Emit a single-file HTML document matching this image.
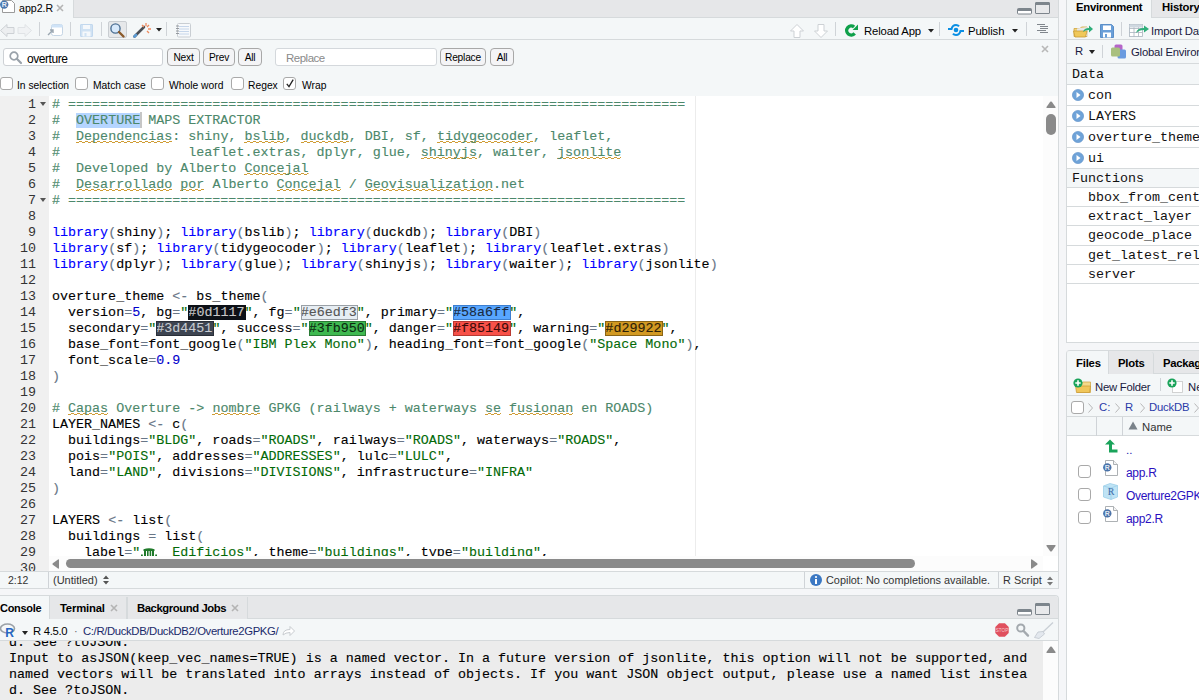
<!DOCTYPE html><html><head><meta charset="utf-8"><style>
*{box-sizing:border-box;margin:0;padding:0}
html,body{width:1199px;height:700px;overflow:hidden;background:#f5f6f8;font-family:"Liberation Sans",sans-serif;font-size:11px;color:#000;position:relative}
.a{position:absolute}
.t{position:absolute;white-space:pre;line-height:1}
.m{font-family:"Liberation Mono",monospace}
.b{font-weight:bold}
.code{position:absolute;left:52px;-webkit-text-stroke:0.12px currentColor;white-space:pre;font-family:"Liberation Mono",monospace;font-size:13.37px;line-height:16px;height:16px;color:#000}
.ln{position:absolute;left:0;width:36px;text-align:right;font-family:"Liberation Mono",monospace;font-size:13.33px;line-height:16px;color:#333}
.c{color:#4c886b}
.k{color:#0000ff}
.s{color:#036a07}
.n{color:#0000cd}
.o{color:#687687}
.sp{display:inline-block;height:16px;vertical-align:top;background-image:linear-gradient(90deg,#cf9c34 3px,transparent 3px),linear-gradient(90deg,transparent 3px,#cf9c34 3px);background-size:6px 1px,6px 1px;background-repeat:repeat-x;background-position:0 13px,0 12px}
.sep{position:absolute;width:1px;background:#cfd3d7}
.cb{position:absolute;width:12px;height:12px;border:1px solid #a9a9a9;border-radius:3px;background:#fff}
.btn{position:absolute;border:1px solid #a8a8a8;border-radius:4px;background:#f4f4f6;height:18px;text-align:center;line-height:15px}
svg{position:absolute;overflow:visible}
</style></head><body><div class="a" style="left:0px;top:0px;width:1059px;height:589px;background:#f4f7f8;border-right:1px solid #d6dadc;border-bottom:1px solid #d6dadc"></div><div class="a" style="left:0px;top:0px;width:1058px;height:18px;background:#e6e7e9;border-bottom:1px solid #d6dadc"></div><div class="a" style="left:0px;top:0px;width:74px;height:18px;background:#f4f7f8;border-right:1px solid #d6dadc"></div><svg style="left:0px;top:0px;" width="16" height="14" viewBox="0 0 16 14"><path d="M2.5 0.5h9l3 3v9h-12z" fill="#fff" stroke="#9a9a9a"/><circle cx="4.2" cy="4.6" r="4.2" fill="#4a78b0"/><text x="4.2" y="7.3" font-size="7" font-weight="bold" fill="#e8eef6" text-anchor="middle" font-family="Liberation Sans">R</text></svg><div class="t " style="left:19px;top:3px;font-size:10.6px;color:#000">app2.R</div><svg style="left:56px;top:4px;" width="8" height="8" viewBox="0 0 8 8"><path d="M1 1L7 7M7 1L1 7" stroke="#b4b4b4" stroke-width="1.6"/></svg><svg style="left:1017px;top:8px;" width="15" height="8" viewBox="0 0 15 8"><rect x="0.5" y="0.5" width="14" height="5.5" rx="1" fill="#fff" stroke="#7d858c" stroke-width="1"/><rect x="0.5" y="0.5" width="14" height="2.5" rx="1" fill="#7d858c"/></svg><svg style="left:1035px;top:2px;" width="15" height="13" viewBox="0 0 15 13"><rect x="0.5" y="0.5" width="14" height="11" rx="0.5" fill="#e8e9eb" stroke="#7d858c" stroke-width="1"/><rect x="0.5" y="0.5" width="14" height="2.5" rx="0.5" fill="#7d858c"/></svg><div class="a" style="left:0px;top:39px;width:1058px;height:1px;background:#d6dadc"></div><svg style="left:0px;top:24px;" width="32" height="13" viewBox="0 0 32 13"><path d="M0.5 6.5L7 0.5V3.5H14V9.5H7V12.5Z" fill="#eceef0" stroke="#cdd1d5"/><path d="M31.5 6.5L25 0.5V3.5H18V9.5H25V12.5Z" fill="#f0f2f4" stroke="#e0e3e6"/></svg><div class="a" style="left:39px;top:22px;width:1px;height:14px;background:#cfd3d7"></div><svg style="left:47px;top:24px;" width="16" height="13" viewBox="0 0 16 13"><rect x="4.5" y="0.5" width="11" height="11" rx="2" fill="#fff" stroke="#c5d5e5"/><rect x="4.5" y="0.5" width="11" height="3" rx="1" fill="#cfe3f7"/><path d="M1 11L6 6M3 6H6V9" stroke="#9aa6b0" stroke-width="1.4" fill="none"/></svg><div class="a" style="left:70px;top:22px;width:1px;height:14px;background:#cfd3d7"></div><svg style="left:80px;top:24px;" width="13" height="13" viewBox="0 0 13 13"><rect x="0.5" y="0.5" width="12" height="12" rx="0.5" fill="#d0e2f3" stroke="#c2d8ee"/><rect x="3" y="1" width="7" height="4" fill="#f5f8fb"/><rect x="2.5" y="7.5" width="8" height="5" fill="#f5f8fb"/><rect x="4.5" y="9" width="2" height="3.5" fill="#d0e2f3"/></svg><div class="a" style="left:101px;top:22px;width:1px;height:14px;background:#cfd3d7"></div><div class="a" style="left:108px;top:21px;width:19px;height:17px;background:#e6e8ea;border:1px solid #c9cdd1;border-radius:2px"></div><svg style="left:110px;top:23px;" width="15" height="14" viewBox="0 0 15 14"><circle cx="5.5" cy="5.5" r="4.6" fill="#d7e9fb" stroke="#4b6f93" stroke-width="1.4"/><path d="M9 9L13.5 13.5" stroke="#8a5a2b" stroke-width="2.4" stroke-linecap="round"/></svg><svg style="left:133px;top:22px;" width="20" height="16" viewBox="0 0 20 16"><path d="M1.5 14.5L11 5" stroke="#4c4f55" stroke-width="2.6" stroke-linecap="round"/><path d="M1.5 14.5L3 13" stroke="#5b9bd5" stroke-width="2.6" stroke-linecap="round"/><path d="M13 1v3M16 3l-2 2M18 7h-3M16 11l-2-2M9 3l2 2" stroke="#f08a5d" stroke-width="1.3"/></svg><svg style="left:156px;top:28px;" width="6" height="4" viewBox="0 0 6 4"><path d="M0 0H6L3 3.5Z" fill="#222"/></svg><div class="a" style="left:166px;top:22px;width:1px;height:14px;background:#cfd3d7"></div><svg style="left:176px;top:23px;" width="15" height="15" viewBox="0 0 15 15"><rect x="1.5" y="0.5" width="13" height="13.5" rx="1" fill="#f7f9fb" stroke="#c9ced3"/><path d="M3 3.5H13M3 6H13M3 8.5H13M3 11H13" stroke="#c6d6ea" stroke-width="1"/><path d="M0 3h3M0 5.5h3M0 8h3M0 10.5h3" stroke="#8c9196" stroke-width="0.9"/></svg><svg style="left:790px;top:24px;" width="14" height="14" viewBox="0 0 14 14"><path d="M7 0.5L13.5 7H10V13.5H4V7H0.5Z" fill="#fff" stroke="#cdd1d5"/></svg><svg style="left:814px;top:24px;" width="14" height="14" viewBox="0 0 14 14"><path d="M7 13.5L13.5 7H10V0.5H4V7H0.5Z" fill="#fff" stroke="#cdd1d5"/></svg><div class="a" style="left:835px;top:22px;width:1px;height:14px;background:#cfd3d7"></div><svg style="left:844px;top:23px;" width="15" height="15" viewBox="0 0 15 15"><path d="M10.65 10.39A4.5 4.5 0 1 1 10.09 4.05" stroke="#0fa04a" stroke-width="3.4" fill="none"/><path d="M14 1.6V7H8.6Z" fill="#0fa04a"/></svg><div class="t " style="left:864px;top:26px;font-size:11.3px;letter-spacing:-0.15px">Reload App</div><svg style="left:928px;top:29px;" width="6" height="4" viewBox="0 0 6 4"><path d="M0 0H6L3 3.5Z" fill="#222"/></svg><div class="a" style="left:939px;top:22px;width:1px;height:14px;background:#cfd3d7"></div><svg style="left:947px;top:23px;" width="18" height="14" viewBox="0 0 18 14"><path d="M1 6H4.5Q5.5 2 9 2Q11 2 12 3.3" stroke="#0b8fe3" stroke-width="2.1" fill="none"/><path d="M17 8H13.5Q12.5 12 9 12Q7 12 6 10.7" stroke="#0b8fe3" stroke-width="2.1" fill="none"/><circle cx="9" cy="7" r="2.3" fill="#0b8fe3"/></svg><div class="t " style="left:968px;top:26px;font-size:11.3px;letter-spacing:-0.1px">Publish</div><svg style="left:1012px;top:29px;" width="6" height="4" viewBox="0 0 6 4"><path d="M0 0H6L3 3.5Z" fill="#222"/></svg><div class="a" style="left:1026px;top:22px;width:1px;height:14px;background:#cfd3d7"></div><svg style="left:1037px;top:23px;" width="12" height="11" viewBox="0 0 12 11"><path d="M0 1.5H8M3 3.5H11M3 5.5H11M0 7.5H9M3 9.5H11" stroke="#80868c" stroke-width="1"/></svg><div class="a" style="left:3px;top:48px;width:160px;height:18px;background:#fff;border:1px solid #cdd1d5;border-radius:3px"></div><svg style="left:9px;top:51px;" width="14" height="13" viewBox="0 0 14 13"><circle cx="5" cy="5" r="3.8" fill="none" stroke="#9aa2aa" stroke-width="1.7"/><path d="M7.8 7.8L12 12" stroke="#9aa2aa" stroke-width="2.2" stroke-linecap="round"/></svg><div class="t " style="left:27px;top:53px;font-size:12px;letter-spacing:-0.45px">overture</div><div class="btn" style="left:167px;top:48px;width:33px"><span class="t" style="position:static;font-size:10.2px;line-height:17px;letter-spacing:-0.2px">Next</span></div><div class="btn" style="left:203px;top:48px;width:32px"><span class="t" style="position:static;font-size:10.2px;line-height:17px;letter-spacing:-0.2px">Prev</span></div><div class="btn" style="left:238px;top:48px;width:24px"><span class="t" style="position:static;font-size:10.2px;line-height:17px;letter-spacing:-0.2px">All</span></div><div class="btn" style="left:440px;top:48px;width:46px"><span class="t" style="position:static;font-size:10.2px;line-height:17px;letter-spacing:-0.2px">Replace</span></div><div class="btn" style="left:490px;top:48px;width:24px"><span class="t" style="position:static;font-size:10.2px;line-height:17px;letter-spacing:-0.2px">All</span></div><div class="a" style="left:275px;top:48px;width:162px;height:18px;background:#fff;border:1px solid #d4d8dc;border-radius:3px"></div><div class="t " style="left:286px;top:53px;font-size:11.5px;letter-spacing:-0.5px;color:#8a8a8a">Replace</div><svg style="left:1041px;top:45px;" width="8" height="8" viewBox="0 0 8 8"><path d="M1 1L7 7M7 1L1 7" stroke="#b8b8b8" stroke-width="1.6"/></svg><div class="a" style="left:0px;top:77px;width:13px;height:13px;background:#fff;border:1px solid #a9a9a9;border-radius:3px"></div><div class="t " style="left:17px;top:81px;font-size:10.3px">In selection</div><div class="a" style="left:75px;top:77px;width:13px;height:13px;background:#fff;border:1px solid #a9a9a9;border-radius:3px"></div><div class="t " style="left:93px;top:81px;font-size:10.3px">Match case</div><div class="a" style="left:151px;top:77px;width:13px;height:13px;background:#fff;border:1px solid #a9a9a9;border-radius:3px"></div><div class="t " style="left:169px;top:81px;font-size:10.3px">Whole word</div><div class="a" style="left:231px;top:77px;width:13px;height:13px;background:#fff;border:1px solid #a9a9a9;border-radius:3px"></div><div class="t " style="left:248px;top:81px;font-size:10.3px">Regex</div><div class="a" style="left:283px;top:77px;width:13px;height:13px;background:#fff;border:1px solid #a9a9a9;border-radius:3px"></div><div class="t " style="left:302px;top:81px;font-size:10.3px">Wrap</div><svg style="left:286px;top:79px;" width="8" height="9" viewBox="0 0 8 9"><path d="M0.8 4.8L3 7.6L7.2 0.6" stroke="#222" stroke-width="1.3" fill="none"/></svg><div class="a" style="left:0px;top:96px;width:49px;height:475px;background:#f0f0f0"></div><div class="a" style="left:49px;top:96px;width:994px;height:460px;background:#fff"></div><div class="a" style="left:695px;top:96px;width:1px;height:460px;background:#ececec"></div><div class="a" style="left:1043px;top:96px;width:15px;height:460px;background:#fcfcfc"></div><svg style="left:1046px;top:101px;" width="10" height="8" viewBox="0 0 10 8"><path d="M4.2 0.8Q5 0 5.8 0.8L9.5 6Q10 7 9 7H1Q0 7 0.5 6Z" fill="#8a8a8a"/></svg><div class="a" style="left:1046px;top:114px;width:10px;height:21px;background:#8a8a8a;border-radius:5px"></div><svg style="left:1046px;top:545px;" width="10" height="8" viewBox="0 0 10 8"><path d="M4.2 6.2Q5 7 5.8 6.2L9.5 1Q10 0 9 0H1Q0 0 0.5 1Z" fill="#8a8a8a"/></svg><div class="a" style="left:0;top:96px;width:1043px;height:475px;overflow:hidden"><div class="ln" style="top:1px">1</div><div class="code" style="top:1px;clip-path:inset(0 0 0px 0)"><span class="c"># =============================================================================</span></div><div class="ln" style="top:17px">2</div><div class="code" style="top:17px;clip-path:inset(0 0 0px 0)"><span class="c">#  <span style="background:#b5d5ff;box-shadow:1px 0 0 #b5d5ff">OVERTURE</span> MAPS EXTRACTOR</span></div><div class="ln" style="top:33px">3</div><div class="code" style="top:33px;clip-path:inset(0 0 0px 0)"><span class="c">#  <span class="sp">Dependencias</span>: shiny, <span class="sp">bslib</span>, <span class="sp">duckdb</span>, DBI, sf, <span class="sp">tidygeocoder</span>, leaflet,</span></div><div class="ln" style="top:49px">4</div><div class="code" style="top:49px;clip-path:inset(0 0 0px 0)"><span class="c">#                leaflet.extras, dplyr, glue, <span class="sp">shinyjs</span>, waiter, <span class="sp">jsonlite</span></span></div><div class="ln" style="top:65px">5</div><div class="code" style="top:65px;clip-path:inset(0 0 0px 0)"><span class="c">#  Developed by Alberto <span class="sp">Concejal</span></span></div><div class="ln" style="top:81px">6</div><div class="code" style="top:81px;clip-path:inset(0 0 0px 0)"><span class="c">#  <span class="sp">Desarrollado</span> <span class="sp">por</span> Alberto <span class="sp">Concejal</span> / <span class="sp">Geovisualization</span>.net</span></div><div class="ln" style="top:97px">7</div><div class="code" style="top:97px;clip-path:inset(0 0 0px 0)"><span class="c"># =============================================================================</span></div><div class="ln" style="top:113px">8</div><div class="code" style="top:113px;clip-path:inset(0 0 0px 0)"></div><div class="ln" style="top:129px">9</div><div class="code" style="top:129px;clip-path:inset(0 0 0px 0)"><span class="k">library</span><span class="o">(</span>shiny<span class="o">)</span>; <span class="k">library</span><span class="o">(</span>bslib<span class="o">)</span>; <span class="k">library</span><span class="o">(</span>duckdb<span class="o">)</span>; <span class="k">library</span><span class="o">(</span>DBI<span class="o">)</span></div><div class="ln" style="top:145px">10</div><div class="code" style="top:145px;clip-path:inset(0 0 0px 0)"><span class="k">library</span><span class="o">(</span>sf<span class="o">)</span>; <span class="k">library</span><span class="o">(</span>tidygeocoder<span class="o">)</span>; <span class="k">library</span><span class="o">(</span>leaflet<span class="o">)</span>; <span class="k">library</span><span class="o">(</span>leaflet.extras<span class="o">)</span></div><div class="ln" style="top:161px">11</div><div class="code" style="top:161px;clip-path:inset(0 0 0px 0)"><span class="k">library</span><span class="o">(</span>dplyr<span class="o">)</span>; <span class="k">library</span><span class="o">(</span>glue<span class="o">)</span>; <span class="k">library</span><span class="o">(</span>shinyjs<span class="o">)</span>; <span class="k">library</span><span class="o">(</span>waiter<span class="o">)</span>; <span class="k">library</span><span class="o">(</span>jsonlite<span class="o">)</span></div><div class="ln" style="top:177px">12</div><div class="code" style="top:177px;clip-path:inset(0 0 0px 0)"></div><div class="ln" style="top:193px">13</div><div class="code" style="top:193px;clip-path:inset(0 0 0px 0)">overture_theme <span class="o">&lt;-</span> bs_theme<span class="o">(</span></div><div class="ln" style="top:209px">14</div><div class="code" style="top:209px;clip-path:inset(0 0 0px 0)">  version<span class="o">=</span><span class="n">5</span>, bg<span class="o">=</span><span class="s">"</span><span style="background:#0d1117;color:#c8c8c8;outline:1px solid #0d1117;outline-offset:-1px;padding-right:1.5px;margin-right:-1.5px">#0d1117</span><span class="s">"</span>, fg<span class="o">=</span><span class="s">"</span><span style="background:#e6edf3;color:#555;outline:1px solid #9aa0a6;outline-offset:-1px;padding-right:1.5px;margin-right:-1.5px">#e6edf3</span><span class="s">"</span>, primary<span class="o">=</span><span class="s">"</span><span style="background:#58a6ff;color:#1a2a40;outline:1px solid #3d7fd0;outline-offset:-1px;padding-right:1.5px;margin-right:-1.5px">#58a6ff</span><span class="s">"</span>,</div><div class="ln" style="top:225px">15</div><div class="code" style="top:225px;clip-path:inset(0 0 0px 0)">  secondary<span class="o">=</span><span class="s">"</span><span style="background:#3d4451;color:#c8ccd2;outline:1px solid #2a2f38;outline-offset:-1px;padding-right:1.5px;margin-right:-1.5px">#3d4451</span><span class="s">"</span>, success<span class="o">=</span><span class="s">"</span><span style="background:#3fb950;color:#0c2a10;outline:1px solid #2a7a35;outline-offset:-1px;padding-right:1.5px;margin-right:-1.5px">#3fb950</span><span class="s">"</span>, danger<span class="o">=</span><span class="s">"</span><span style="background:#f85149;color:#3a0b08;outline:1px solid #b83a33;outline-offset:-1px;padding-right:1.5px;margin-right:-1.5px">#f85149</span><span class="s">"</span>, warning<span class="o">=</span><span class="s">"</span><span style="background:#d29922;color:#2d2008;outline:1px solid #8a6416;outline-offset:-1px;padding-right:1.5px;margin-right:-1.5px">#d29922</span><span class="s">"</span>,</div><div class="ln" style="top:241px">16</div><div class="code" style="top:241px;clip-path:inset(0 0 0px 0)">  base_font<span class="o">=</span>font_google<span class="o">(</span><span class="s">"IBM Plex Mono"</span><span class="o">)</span>, heading_font<span class="o">=</span>font_google<span class="o">(</span><span class="s">"Space Mono"</span><span class="o">)</span>,</div><div class="ln" style="top:257px">17</div><div class="code" style="top:257px;clip-path:inset(0 0 0px 0)">  font_scale<span class="o">=</span><span class="n">0.9</span></div><div class="ln" style="top:273px">18</div><div class="code" style="top:273px;clip-path:inset(0 0 0px 0)"><span class="o">)</span></div><div class="ln" style="top:289px">19</div><div class="code" style="top:289px;clip-path:inset(0 0 0px 0)"></div><div class="ln" style="top:305px">20</div><div class="code" style="top:305px;clip-path:inset(0 0 0px 0)"><span class="c"># <span class="sp">Capas</span> Overture -&gt; <span class="sp">nombre</span> GPKG (railways + waterways <span class="sp">se</span> <span class="sp">fusionan</span> en ROADS)</span></div><div class="ln" style="top:321px">21</div><div class="code" style="top:321px;clip-path:inset(0 0 0px 0)">LAYER_NAMES <span class="o">&lt;-</span> c<span class="o">(</span></div><div class="ln" style="top:337px">22</div><div class="code" style="top:337px;clip-path:inset(0 0 0px 0)">  buildings<span class="o">=</span><span class="s">"BLDG"</span>, roads<span class="o">=</span><span class="s">"ROADS"</span>, railways<span class="o">=</span><span class="s">"ROADS"</span>, waterways<span class="o">=</span><span class="s">"ROADS"</span>,</div><div class="ln" style="top:353px">23</div><div class="code" style="top:353px;clip-path:inset(0 0 0px 0)">  pois<span class="o">=</span><span class="s">"POIS"</span>, addresses<span class="o">=</span><span class="s">"ADDRESSES"</span>, lulc<span class="o">=</span><span class="s">"LULC"</span>,</div><div class="ln" style="top:369px">24</div><div class="code" style="top:369px;clip-path:inset(0 0 0px 0)">  land<span class="o">=</span><span class="s">"LAND"</span>, divisions<span class="o">=</span><span class="s">"DIVISIONS"</span>, infrastructure<span class="o">=</span><span class="s">"INFRA"</span></div><div class="ln" style="top:385px">25</div><div class="code" style="top:385px;clip-path:inset(0 0 0px 0)"><span class="o">)</span></div><div class="ln" style="top:401px">26</div><div class="code" style="top:401px;clip-path:inset(0 0 0px 0)"></div><div class="ln" style="top:417px">27</div><div class="code" style="top:417px;clip-path:inset(0 0 0px 0)">LAYERS <span class="o">&lt;-</span> list<span class="o">(</span></div><div class="ln" style="top:433px">28</div><div class="code" style="top:433px;clip-path:inset(0 0 0px 0)">  buildings <span class="o">=</span> list<span class="o">(</span></div><div class="ln" style="top:449px">29</div><div class="code" style="top:449px;clip-path:inset(0 0 4px 0)">    label<span class="o">=</span><span class="s">"<span style="display:inline-block;width:24px;height:12px;position:relative;vertical-align:-1px"><svg width="16" height="10" style="position:absolute;left:1px;top:3px" viewBox="0 0 16 10"><path d="M2.5 1.2Q8 -0.5 13.5 1.2V3H2.5Z" fill="#1f7a2a"/><path d="M3 3h2v5H3zM6 3h1.6v5H6zM8.6 3h1.6v5H8.6zM11 3h2v5h-2z" fill="#1f7a2a"/><path d="M1.5 8h13v1.5h-13z" fill="#1f7a2a"/><path d="M0 6.5h1.8v3H0zM14.2 6.5H16v3h-1.8z" fill="#1f7a2a"/></svg></span> Edificios"</span>, theme<span class="o">=</span><span class="s">"buildings"</span>, type<span class="o">=</span><span class="s">"building"</span>,</div><div class="ln" style="top:465px">30</div><svg style="left:40px;top:6px" width="6" height="4" viewBox="0 0 6 4"><path d="M0 0H6L3 4Z" fill="#555"/></svg><svg style="left:40px;top:102px" width="6" height="4" viewBox="0 0 6 4"><path d="M0 0H6L3 4Z" fill="#555"/></svg></div><div class="a" style="left:140px;top:112px;width:2px;height:16px;background:#c6c6c6"></div><div class="a" style="left:49px;top:556px;width:994px;height:15px;background:#fcfcfc"></div><svg style="left:52px;top:559px;" width="8" height="10" viewBox="0 0 8 10"><path d="M0.8 4.2Q0 5 0.8 5.8L6 9.5Q7 10 7 9V1Q7 0 6 0.5Z" fill="#8a8a8a"/></svg><div class="a" style="left:66px;top:559px;width:849px;height:9px;background:#8a8a8a;border-radius:5px"></div><svg style="left:1031px;top:559px;" width="8" height="10" viewBox="0 0 8 10"><path d="M6.2 4.2Q7 5 6.2 5.8L1 9.5Q0 10 0 9V1Q0 0 1 0.5Z" fill="#8a8a8a"/></svg><div class="a" style="left:1043px;top:556px;width:15px;height:15px;background:#fff"></div><div class="a" style="left:0px;top:571px;width:1058px;height:1px;background:#d6dadc"></div><div class="t " style="left:8px;top:575px;font-size:10.5px;color:#333">2:12</div><div class="a" style="left:48px;top:572px;width:1px;height:16px;background:#cfd3d7"></div><div class="t " style="left:53px;top:575px;font-size:11px;color:#333">(Untitled)</div><svg style="left:103px;top:575px;" width="6" height="10" viewBox="0 0 6 10"><path d="M0 4L3 0.5L6 4ZM0 6L3 9.5L6 6Z" fill="#555"/></svg><div class="a" style="left:804px;top:572px;width:1px;height:16px;background:#cfd3d7"></div><svg style="left:810px;top:574px;" width="12" height="12" viewBox="0 0 12 12"><circle cx="6" cy="6" r="6" fill="#3b78c3"/><rect x="5" y="5" width="2" height="5" fill="#fff"/><circle cx="6" cy="3" r="1.1" fill="#fff"/></svg><div class="t " style="left:826px;top:575px;font-size:10.9px;color:#333">Copilot: No completions available.</div><div class="a" style="left:998px;top:572px;width:1px;height:16px;background:#cfd3d7"></div><div class="t " style="left:1003px;top:575px;font-size:10.9px;color:#333">R Script</div><svg style="left:1047px;top:576px;" width="6" height="10" viewBox="0 0 6 10"><path d="M0 4L3 0.5L6 4ZM0 6L3 9.5L6 6Z" fill="#777"/></svg><div class="a" style="left:0px;top:595px;width:1059px;height:105px;background:#f4f7f8;border-top:1px solid #d6dadc;border-right:1px solid #d6dadc;border-top-right-radius:4px"></div><div class="a" style="left:0px;top:596px;width:1058px;height:23px;background:#e6e7e9;border-bottom:1px solid #d6dadc;border-top-right-radius:3px"></div><div class="a" style="left:0px;top:596px;width:50px;height:23px;background:#f4f7f8;border-right:1px solid #d6dadc"></div><div class="t " style="left:0px;top:603px;font-size:11px;font-weight:bold;letter-spacing:-0.3px">Console</div><div class="a" style="left:50px;top:597px;width:77px;height:22px;background:#e6e7e9;border-right:1px solid #d6dadc"></div><div class="t " style="left:60px;top:603px;font-size:11.3px;font-weight:bold;letter-spacing:-0.2px">Terminal</div><svg style="left:110px;top:604px;" width="8" height="8" viewBox="0 0 8 8"><path d="M1 1L7 7M7 1L1 7" stroke="#b4b4b4" stroke-width="1.6"/></svg><div class="a" style="left:127px;top:597px;width:121px;height:22px;background:#e6e7e9;border-right:1px solid #d6dadc;border-left:1px solid #d6dadc"></div><div class="t " style="left:137px;top:603px;font-size:11.3px;font-weight:bold;letter-spacing:-0.42px">Background Jobs</div><svg style="left:231px;top:604px;" width="8" height="8" viewBox="0 0 8 8"><path d="M1 1L7 7M7 1L1 7" stroke="#b4b4b4" stroke-width="1.6"/></svg><svg style="left:1017px;top:609px;" width="15" height="8" viewBox="0 0 15 8"><rect x="0.5" y="0.5" width="14" height="5.5" rx="1" fill="#fff" stroke="#7d858c" stroke-width="1"/><rect x="0.5" y="0.5" width="14" height="2.5" rx="1" fill="#7d858c"/></svg><svg style="left:1035px;top:603px;" width="15" height="13" viewBox="0 0 15 13"><rect x="0.5" y="0.5" width="14" height="11" rx="0.5" fill="#e8e9eb" stroke="#7d858c" stroke-width="1"/><rect x="0.5" y="0.5" width="14" height="2.5" rx="0.5" fill="#7d858c"/></svg><div class="a" style="left:0px;top:640px;width:1058px;height:1px;background:#d6dadc"></div><svg style="left:0px;top:623px;" width="17" height="14" viewBox="0 0 17 14"><ellipse cx="7.5" cy="5.5" rx="7" ry="4.5" fill="none" stroke="#9aa0a6" stroke-width="1.6"/><text x="9.5" y="13.5" font-size="12" font-weight="bold" fill="#2566c4" text-anchor="middle" font-family="Liberation Sans">R</text></svg><svg style="left:22px;top:631px;" width="6" height="4" viewBox="0 0 6 4"><path d="M0 0H6L3 4Z" fill="#222"/></svg><div class="t " style="left:33px;top:626px;font-size:11.3px;letter-spacing:-0.3px">R 4.5.0</div><div class="t " style="left:74px;top:626px;font-size:11px;color:#666">·</div><div class="t " style="left:83px;top:626px;font-size:11.3px;letter-spacing:-0.35px;color:#1a2a6a">C:/R/DuckDB/DuckDB2/Overture2GPKG/</div><svg style="left:282px;top:626px;" width="13" height="10" viewBox="0 0 13 10"><path d="M1 9Q1 3.5 8 3.5V0.5L12.5 5L8 9.5V6.5Q3.5 6.5 1 9Z" fill="#fff" stroke="#c8ccd0"/></svg><svg style="left:995px;top:623px;" width="14" height="14" viewBox="0 0 14 14"><path d="M4.1 0.3H9.9L13.7 4.1V9.9L9.9 13.7H4.1L0.3 9.9V4.1Z" fill="#e0505e"/><text x="7" y="9" font-size="4.6" fill="#f6c6cc" text-anchor="middle" font-family="Liberation Sans">STOP</text></svg><svg style="left:1016px;top:623px;" width="14" height="14" viewBox="0 0 14 14"><circle cx="4.8" cy="5" r="3.6" fill="none" stroke="#a3a9ae" stroke-width="2"/><path d="M7.6 8L12 12.6" stroke="#a3a9ae" stroke-width="2.4" stroke-linecap="round"/></svg><svg style="left:1034px;top:622px;" width="20" height="17" viewBox="0 0 20 17"><path d="M19 0.5L9 10" stroke="#c9cfd5" stroke-width="1.3"/><path d="M4 10L9 9.5L10.5 12L5 16.5L0.5 15.5Z" fill="#e3e8ee" stroke="#c0c7ce" stroke-width="0.8"/></svg><div class="a" style="left:0px;top:641px;width:1043px;height:59px;background:#ececec"></div><div class="a" style="left:1043px;top:641px;width:15px;height:59px;background:#fcfcfc"></div><svg style="left:1046px;top:646px;" width="10" height="8" viewBox="0 0 10 8"><path d="M4.2 0.8Q5 0 5.8 0.8L9.5 6Q10 7 9 7H1Q0 7 0.5 6Z" fill="#8a8a8a"/></svg><div class="a" style="left:0;top:641px;width:1043px;height:59px;overflow:hidden"><div class="code" style="left:9px;top:-6px">d. See ?toJSON.</div><div class="code" style="left:9px;top:10px">Input to asJSON(keep_vec_names=TRUE) is a named vector. In a future version of jsonlite, this option will not be supported, and</div><div class="code" style="left:9px;top:26px">named vectors will be translated into arrays instead of objects. If you want JSON object output, please use a named list instea</div><div class="code" style="left:9px;top:42px">d. See ?toJSON.</div></div><div class="a" style="left:1066px;top:0px;width:140px;height:343px;background:#fff;border-left:1px solid #d6dadc;border-bottom:1px solid #d6dadc"></div><div class="a" style="left:1067px;top:0px;width:140px;height:18px;background:#e6e7e9;border-bottom:1px solid #d6dadc"></div><div class="a" style="left:1067px;top:0px;width:85px;height:18px;background:#f4f7f8;border-right:1px solid #d6dadc"></div><div class="t " style="left:1076px;top:2px;font-size:11.3px;font-weight:bold;letter-spacing:-0.25px">Environment</div><div class="t " style="left:1162px;top:2px;font-size:11.3px;font-weight:bold;letter-spacing:-0.2px">History</div><div class="a" style="left:1067px;top:18px;width:140px;height:46px;background:#f4f7f8"></div><div class="a" style="left:1067px;top:39px;width:140px;height:1px;background:#d6dadc"></div><svg style="left:1073px;top:24px;" width="21" height="14" viewBox="0 0 21 14"><path d="M1 4.5H7L8.5 3H14V12.5H1Z" fill="#f2d57a" stroke="#cfa440" stroke-width="0.8"/><path d="M4 4.5L14.5 3V12L4 12.5Z" fill="#e8e8e8"/><path d="M0.5 7H14L12.5 13H2Z" fill="#f0c85a" stroke="#c89a35" stroke-width="0.8"/><path d="M10 8Q11 4 16 4V1.5L20 5L16 8.5V6Q12 6 10 8Z" fill="#2fae7a"/></svg><svg style="left:1100px;top:24px;" width="14" height="14" viewBox="0 0 14 14"><path d="M0.5 0.5h11l2 2v11h-13z" fill="#6a9fd8" stroke="#5b8fc8"/><rect x="3" y="1.5" width="8" height="4.5" fill="#fff"/><rect x="3" y="8.5" width="8" height="5" fill="#fff"/><rect x="5" y="10" width="2" height="3.5" fill="#6a9fd8"/></svg><div class="a" style="left:1121px;top:22px;width:1px;height:14px;background:#cfd3d7"></div><svg style="left:1129px;top:24px;" width="21" height="13" viewBox="0 0 21 13"><rect x="0.5" y="0.5" width="13" height="12" fill="#fff" stroke="#aab4be" stroke-width="0.8"/><path d="M0.5 4.5H13.5M0.5 8.5H13.5M5 0.5V12.5M9.5 0.5V12.5" stroke="#aab4be" stroke-width="0.8"/><rect x="0.5" y="0.5" width="13" height="3" fill="#cfd8e0"/><path d="M7 9Q8 4 15 4V1.5L20 5L15 8.5V6Q10 6 7 9Z" fill="#2fae7a"/></svg><div class="t " style="left:1151px;top:26px;font-size:11.3px;letter-spacing:-0.2px;color:#1a1a40">Import Dataset</div><div class="a" style="left:1067px;top:63px;width:140px;height:1px;background:#d6dadc"></div><div class="t " style="left:1075px;top:46px;font-size:11.3px;color:#1a1a40">R</div><svg style="left:1089px;top:50px;" width="6" height="4" viewBox="0 0 6 4"><path d="M0 0H6L3 4Z" fill="#222"/></svg><div class="a" style="left:1102px;top:45px;width:1px;height:13px;background:#cfd3d7"></div><svg style="left:1111px;top:44px;" width="16" height="15" viewBox="0 0 16 15"><rect x="3.5" y="0.5" width="8" height="8" rx="1.5" fill="#b566c9"/><rect x="6.5" y="5.5" width="8.5" height="9" rx="1.5" fill="#6a9be0"/><rect x="0" y="3.5" width="9" height="9" rx="1.5" fill="#a9c07f"/></svg><div class="t " style="left:1131px;top:47px;font-size:11.3px;letter-spacing:-0.2px;color:#1a1a40">Global Environment</div><div class="a" style="left:1067px;top:64px;width:140px;height:21px;background:#f4f7f8;border-bottom:1px solid #d6dadc"></div><div class="t m" style="left:1072px;top:68px;font-size:13.33px;color:#111">Data</div><div class="a" style="left:1067px;top:85px;width:140px;height:21px;background:#fff;border-bottom:1px solid #d6dadc"></div><svg style="left:1072px;top:89px;" width="12" height="12" viewBox="0 0 12 12"><circle cx="6" cy="6" r="5.6" fill="#6fa3d8"/><circle cx="6" cy="6" r="5.6" fill="none" stroke="#5b8fc8" stroke-width="0.6"/><path d="M4.5 3L8.5 6L4.5 9Z" fill="#fff"/></svg><div class="t m" style="left:1088px;top:89px;font-size:13.33px;color:#111">con</div><div class="a" style="left:1067px;top:106px;width:140px;height:21px;background:#fff;border-bottom:1px solid #d6dadc"></div><svg style="left:1072px;top:110px;" width="12" height="12" viewBox="0 0 12 12"><circle cx="6" cy="6" r="5.6" fill="#6fa3d8"/><circle cx="6" cy="6" r="5.6" fill="none" stroke="#5b8fc8" stroke-width="0.6"/><path d="M4.5 3L8.5 6L4.5 9Z" fill="#fff"/></svg><div class="t m" style="left:1088px;top:110px;font-size:13.33px;color:#111">LAYERS</div><div class="a" style="left:1067px;top:127px;width:140px;height:21px;background:#fff;border-bottom:1px solid #d6dadc"></div><svg style="left:1072px;top:131px;" width="12" height="12" viewBox="0 0 12 12"><circle cx="6" cy="6" r="5.6" fill="#6fa3d8"/><circle cx="6" cy="6" r="5.6" fill="none" stroke="#5b8fc8" stroke-width="0.6"/><path d="M4.5 3L8.5 6L4.5 9Z" fill="#fff"/></svg><div class="t m" style="left:1088px;top:131px;font-size:13.33px;color:#111">overture_theme</div><div class="a" style="left:1067px;top:148px;width:140px;height:21px;background:#fff;border-bottom:1px solid #d6dadc"></div><svg style="left:1072px;top:152px;" width="12" height="12" viewBox="0 0 12 12"><circle cx="6" cy="6" r="5.6" fill="#6fa3d8"/><circle cx="6" cy="6" r="5.6" fill="none" stroke="#5b8fc8" stroke-width="0.6"/><path d="M4.5 3L8.5 6L4.5 9Z" fill="#fff"/></svg><div class="t m" style="left:1088px;top:152px;font-size:13.33px;color:#111">ui</div><div class="a" style="left:1067px;top:169px;width:140px;height:19px;background:#f4f7f8;border-bottom:1px solid #d6dadc"></div><div class="t m" style="left:1072px;top:172px;font-size:13.33px;color:#111">Functions</div><div class="a" style="left:1067px;top:188.0px;width:140px;height:19.2px;background:#fff;border-bottom:1px solid #d6dadc"></div><div class="t m" style="left:1088px;top:191.0px;font-size:13.33px;color:#111">bbox_from_center</div><div class="a" style="left:1067px;top:207.2px;width:140px;height:19.2px;background:#fff;border-bottom:1px solid #d6dadc"></div><div class="t m" style="left:1088px;top:210.2px;font-size:13.33px;color:#111">extract_layer</div><div class="a" style="left:1067px;top:226.4px;width:140px;height:19.2px;background:#fff;border-bottom:1px solid #d6dadc"></div><div class="t m" style="left:1088px;top:229.4px;font-size:13.33px;color:#111">geocode_place</div><div class="a" style="left:1067px;top:245.6px;width:140px;height:19.2px;background:#fff;border-bottom:1px solid #d6dadc"></div><div class="t m" style="left:1088px;top:248.6px;font-size:13.33px;color:#111">get_latest_release</div><div class="a" style="left:1067px;top:264.8px;width:140px;height:19.2px;background:#fff;border-bottom:1px solid #d6dadc"></div><div class="t m" style="left:1088px;top:267.8px;font-size:13.33px;color:#111">server</div><div class="a" style="left:1066px;top:350px;width:140px;height:350px;background:#fff;border-left:1px solid #d6dadc;border-top:1px solid #d6dadc;border-top-left-radius:4px"></div><div class="a" style="left:1067px;top:351px;width:140px;height:23px;background:#e6e7e9;border-bottom:1px solid #d6dadc"></div><div class="a" style="left:1067px;top:351px;width:42px;height:23px;background:#f4f7f8;border-right:1px solid #d6dadc;border-top-left-radius:3px"></div><div class="t " style="left:1076px;top:358px;font-size:11.3px;font-weight:bold;letter-spacing:-0.2px">Files</div><div class="a" style="left:1109px;top:352px;width:45px;height:22px;background:#e6e7e9;border-right:1px solid #d6dadc;border-top-right-radius:3px"></div><div class="t " style="left:1118px;top:358px;font-size:11.3px;font-weight:bold;letter-spacing:-0.2px">Plots</div><div class="t " style="left:1163px;top:358px;font-size:11.3px;font-weight:bold;letter-spacing:-0.3px">Packages</div><div class="a" style="left:1067px;top:374px;width:140px;height:42px;background:#f4f7f8"></div><div class="a" style="left:1067px;top:395px;width:140px;height:1px;background:#d6dadc"></div><svg style="left:1073px;top:378px;" width="19" height="15" viewBox="0 0 19 15"><path d="M4 5H9L10 4H17.5V14.5H4Z" fill="#f4d98a" stroke="#d2a84a" stroke-width="0.8"/><path d="M2.5 8H17.5L16.5 14.5H3.5Z" fill="#f0c65a" stroke="#c89a35" stroke-width="0.7"/><circle cx="5" cy="5" r="4.6" fill="#1aa35a"/><path d="M5 2.3V7.7M2.3 5H7.7" stroke="#fff" stroke-width="1.6"/></svg><div class="t " style="left:1095px;top:382px;font-size:11.3px;letter-spacing:-0.25px;color:#1a1a40">New Folder</div><div class="a" style="left:1160px;top:378px;width:1px;height:13px;background:#cfd3d7"></div><svg style="left:1167px;top:378px;" width="18" height="15" viewBox="0 0 18 15"><rect x="5.5" y="3.5" width="10" height="11" fill="#fff" stroke="#c8c8c8" stroke-width="0.8"/><circle cx="5" cy="5" r="4.6" fill="#1aa35a"/><path d="M5 2.3V7.7M2.3 5H7.7" stroke="#fff" stroke-width="1.6"/></svg><div class="t " style="left:1188px;top:382px;font-size:11.3px;color:#1a1a40">New</div><div class="a" style="left:1067px;top:416px;width:140px;height:1px;background:#d6dadc"></div><div class="a" style="left:1071px;top:401px;width:13px;height:13px;background:#fff;border:1px solid #a9a9a9;border-radius:3px"></div><svg style="left:1088px;top:403px;" width="5" height="10" viewBox="0 0 5 10"><path d="M0.5 0.5L4.5 5L0.5 9.5" stroke="#b8b8b8" fill="none"/></svg><svg style="left:1115px;top:403px;" width="5" height="10" viewBox="0 0 5 10"><path d="M0.5 0.5L4.5 5L0.5 9.5" stroke="#b8b8b8" fill="none"/></svg><svg style="left:1140px;top:403px;" width="5" height="10" viewBox="0 0 5 10"><path d="M0.5 0.5L4.5 5L0.5 9.5" stroke="#b8b8b8" fill="none"/></svg><svg style="left:1194px;top:403px;" width="5" height="10" viewBox="0 0 5 10"><path d="M0.5 0.5L4.5 5L0.5 9.5" stroke="#b8b8b8" fill="none"/></svg><div class="t " style="left:1099px;top:402px;font-size:11.3px;color:#2a3aa8">C:</div><div class="t " style="left:1125px;top:402px;font-size:11.3px;color:#2a3aa8">R</div><div class="t " style="left:1149px;top:402px;font-size:11.3px;color:#2a3aa8;letter-spacing:-0.2px">DuckDB</div><div class="a" style="left:1067px;top:417px;width:140px;height:19px;background:#f4f7f8;border-bottom:1px solid #d6dadc"></div><div class="a" style="left:1096px;top:417px;width:1px;height:19px;background:#cfd3d7"></div><div class="a" style="left:1122px;top:417px;width:1px;height:19px;background:#cfd3d7"></div><svg style="left:1128px;top:421px;" width="10" height="9" viewBox="0 0 10 9"><path d="M5 0.5L9.5 8.5H0.5Z" fill="#7a828a"/></svg><div class="t " style="left:1142px;top:422px;font-size:11.3px;color:#333">Name</div><svg style="left:1104px;top:439px;" width="14" height="14" viewBox="0 0 14 14"><path d="M6 0.5L11 5.5H8V10.5H13.5V13.5H5V5.5H1Z" fill="#1aa35a"/></svg><div class="t " style="left:1126px;top:445px;font-size:11.5px;color:#2020b0">..</div><div class="a" style="left:1078px;top:465px;width:13px;height:13px;background:#fff;border:1px solid #a9a9a9;border-radius:3px"></div><svg style="left:1103px;top:460px;" width="17" height="17" viewBox="0 0 17 17"><path d="M2.5 0.5H10.5L14.5 4.5V15.5H2.5Z" fill="#fff" stroke="#a4a8ac" stroke-width="0.9"/><path d="M10.5 0.5V4.5H14.5" fill="#f4f4f4" stroke="#a4a8ac" stroke-width="0.9"/><circle cx="4.3" cy="7.4" r="4.2" fill="#4a72a8"/><text x="4.4" y="10" font-size="7" font-weight="bold" fill="#dfe7f1" text-anchor="middle" font-family="Liberation Sans">R</text></svg><div class="t " style="left:1126px;top:467px;font-size:12px;color:#2a10c0;letter-spacing:-0.3px">app.R</div><div class="a" style="left:1078px;top:488px;width:13px;height:13px;background:#fff;border:1px solid #a9a9a9;border-radius:3px"></div><svg style="left:1103px;top:483px;" width="16" height="17" viewBox="0 0 16 17"><path d="M0.5 3L7 0.5L14.5 2.5V14L8 16.5L0.5 14Z" fill="#bfe3f5" stroke="#9ccfe8" stroke-width="0.8"/><path d="M0.5 3L8 5V16.5M8 5L14.5 2.5" fill="none" stroke="#9ccfe8" stroke-width="0.8"/><text x="8" y="12" font-size="10" fill="#3a6aa8" text-anchor="middle" font-family="Liberation Serif">R</text></svg><div class="t " style="left:1126px;top:490px;font-size:12px;color:#2a10c0;letter-spacing:-0.3px">Overture2GPKG.Rproj</div><div class="a" style="left:1078px;top:511px;width:13px;height:13px;background:#fff;border:1px solid #a9a9a9;border-radius:3px"></div><svg style="left:1103px;top:506px;" width="17" height="17" viewBox="0 0 17 17"><path d="M2.5 0.5H10.5L14.5 4.5V15.5H2.5Z" fill="#fff" stroke="#a4a8ac" stroke-width="0.9"/><path d="M10.5 0.5V4.5H14.5" fill="#f4f4f4" stroke="#a4a8ac" stroke-width="0.9"/><circle cx="4.3" cy="7.4" r="4.2" fill="#4a72a8"/><text x="4.4" y="10" font-size="7" font-weight="bold" fill="#dfe7f1" text-anchor="middle" font-family="Liberation Sans">R</text></svg><div class="t " style="left:1126px;top:513px;font-size:12px;color:#2a10c0;letter-spacing:-0.3px">app2.R</div></body></html>
